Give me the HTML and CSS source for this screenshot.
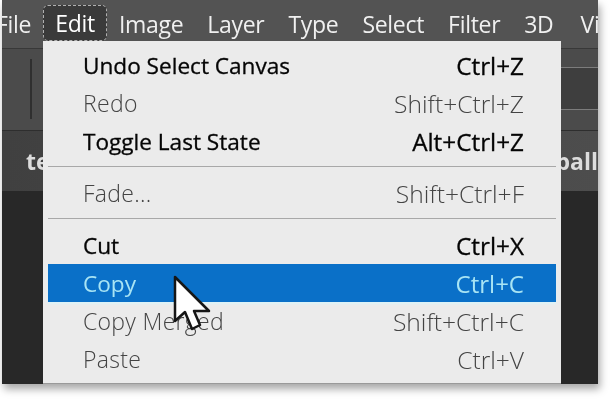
FILE: index.html
```html
<!DOCTYPE html>
<html>
<head>
    <title>Edit menu</title>
    <link rel="stylesheet" href="styles.css">
</head>
<body>
    <div class="window">
        <div class="menubar">
            <span class="top-item file">File</span>
            <span class="top-item active">Edit</span>
            <span class="top-item">Image</span>
            <span class="top-item">Layer</span>
            <span class="top-item">Type</span>
            <span class="top-item">Select</span>
            <span class="top-item">Filter</span>
            <span class="top-item">3D</span>
            <span class="top-item view">View</span>
        </div>
        <div class="options-bar">
            <div class="divider"></div>
            <div class="strip">
                <div class="band"></div>
                <div class="band dark"></div>
                <div class="band"></div>
            </div>
        </div>
        <div class="tabs">
            <span>te</span>
            <span>ball</span>
        </div>
        <div class="canvas"></div>

        <div class="menu">
            <div class="row"><span class="label strong">Undo Select Canvas</span><span class="keys strong">Ctrl+Z</span></div>
            <div class="row off"><span class="label">Redo</span><span class="keys">Shift+Ctrl+Z</span></div>
            <div class="row"><span class="label strong">Toggle Last State</span><span class="keys strong">Alt+Ctrl+Z</span></div>
            <div class="sep"></div>
            <div class="row off"><span class="label">Fade...</span><span class="keys">Shift+Ctrl+F</span></div>
            <div class="sep"></div>
            <div class="row"><span class="label strong">Cut</span><span class="keys strong">Ctrl+X</span></div>
            <div class="row selected"><span class="label">Copy</span><span class="keys">Ctrl+C</span></div>
            <div class="row off"><span class="label">Copy Merged</span><span class="keys">Shift+Ctrl+C</span></div>
            <div class="row off"><span class="label">Paste</span><span class="keys">Ctrl+V</span></div>
        </div>

        <svg class="cursor" width="48" height="66" viewBox="0 0 48 66">
            <path d="M2 2 L2 46 L12 37 L19 54 L27 50 L21 36 L36 36 Z" fill="#fff" stroke="#161616" stroke-width="2.5" stroke-linejoin="round"/>
        </svg>
    </div>
</body>
</html>
```

FILE: styles.css
```css
html, body {
    margin: 0;
    padding: 0;
    height: 100%;
    background-color: #ffffff;
    overflow: hidden;
}

.window {
    position: relative;
    display: flex;
    flex-direction: column;
    width: 596px;
    height: 384px;
    margin-left: 2px;
    overflow: hidden;
    font-family: "Open Sans", sans-serif;
    background-color: #282828;
    box-shadow: 2px 5px 8px rgba(0, 0, 0, 0.35);
    filter: blur(0.4px);
}

.menubar {
    display: flex;
    align-items: center;
    flex: none;
    height: 48px;
    background-color: #535353;
    color: #f0f0f0;
    font-size: 23px;
    letter-spacing: -0.3px;
    white-space: nowrap;
}

.top-item {
    padding: 0 12px;
}

.file {
    margin-left: -18px;
}

.active {
    height: 36px;
    margin-bottom: 2px;
    line-height: 36px;
    background-color: #3a3a3a;
    outline: 1px dashed #b0b0b0;
    outline-offset: -1px;
    border-radius: 5px;
    color: #ffffff;
}

.view {
    margin-left: 3px;
}

.options-bar {
    display: flex;
    justify-content: space-between;
    flex: none;
    height: 81px;
    background-color: #4b4b4b;
    border-top: 1px solid #383838;
    border-bottom: 1px solid #2e2e2e;
}

.divider {
    width: 2px;
    height: 60px;
    margin: 10px 0 0 28px;
    background-color: #2f2f2f;
}

.strip {
    display: flex;
    flex-direction: column;
    width: 120px;
}

.band {
    flex: none;
    height: 18px;
}

.dark {
    height: 41px;
    background-color: #3e3e3e;
    border-top: 1px solid #7c7c7c;
    border-bottom: 1px solid #7c7c7c;
}

.tabs {
    display: flex;
    justify-content: space-between;
    align-items: center;
    flex: none;
    height: 60px;
    padding: 0 0 0 24px;
    background-image: linear-gradient(to right, #404040, #4d4d4d);
    color: #dcdcdc;
    font-size: 23px;
    font-weight: 700;
}

.canvas {
    flex: 1;
    background-color: #282828;
}

/* the open dropdown sits over the rest of the window */
.menu {
    position: absolute;
    left: 41px;
    top: 41px;
    width: 518px;
    height: 343px;
    box-sizing: border-box;
    padding: 5px 5px 0;
    background-color: #ebebeb;
    border-bottom: 1px solid #9a9a9a;
    font-size: 22.6px;
}

.row {
    display: flex;
    justify-content: space-between;
    align-items: center;
    height: 38px;
    padding: 0 32px 0 35px;
}

.keys {
    font-size: 24px;
}

.strong {
    color: #050505;
    font-weight: 500;
    -webkit-text-stroke: 0.3px #050505;
}

.keys.strong {
    font-size: 24.3px;
}

.off {
    color: #444444;
    font-weight: 300;
    font-size: 23px;
}

.off .label {
    letter-spacing: 0.3px;
}

.off .keys {
    font-size: 24.6px;
}

.selected {
    background-color: #0a70c8;
    color: #a8e4f4;
    box-shadow: 0 2px 2px #dcf3f8;
}

.sep {
    height: 1px;
    margin: 6px 0 7px;
    background-color: #a8a8a8;
}

.cursor {
    position: absolute;
    left: 171px;
    top: 275px;
}
```
